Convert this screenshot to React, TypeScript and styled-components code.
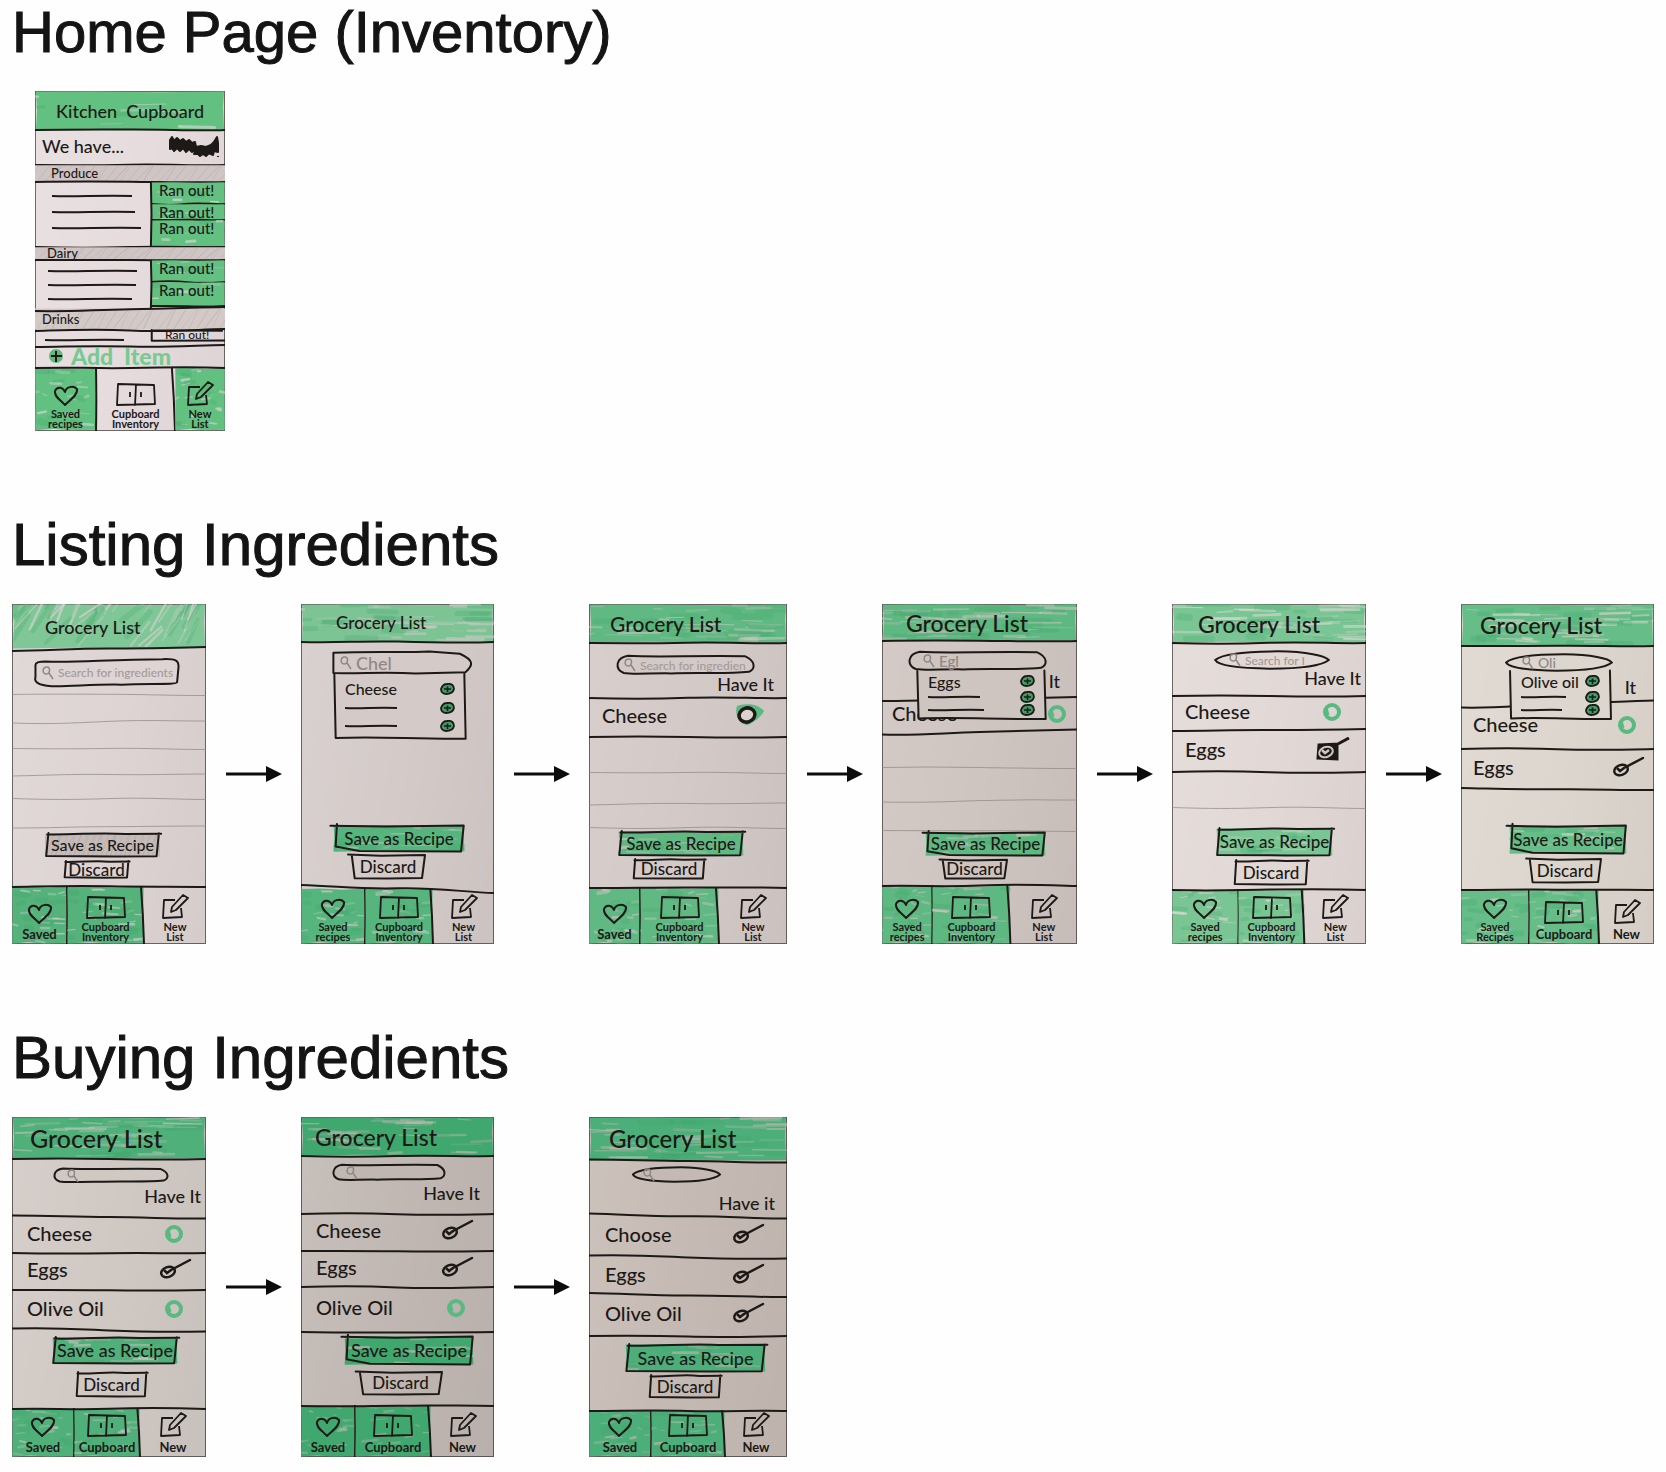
import React from "react";
import styled, { createGlobalStyle } from "styled-components";

const INK = "#1d1917";
const PENCIL = "#8f8785";

/* ---------- page ---------- */

const GlobalStyle = createGlobalStyle`
  *, *::before, *::after { box-sizing: border-box; }
  body { margin: 0; background: #fefefe; color: #141414; }
  ul, h2, h3, h4, p { margin: 0; padding: 0; font-weight: inherit; }
  ul { list-style: none; }
  button, input { font: inherit; color: inherit; background: none; border: 0; padding: 0; margin: 0; border-radius: 0; }
  button { cursor: pointer; }
  svg { display: block; }
`;

const Page = styled.main`
  display: flex;
  flex-direction: column;
  gap: 82px;
  padding: 0 12px 15px;
`;

const Section = styled.section`
  display: flex;
  flex-direction: column;
  gap: 27px;
`;

const SectionTitle = styled.h2<{ $size: number }>`
  font: 400 ${(p) => p.$size}px/64px "Liberation Sans", Arial, sans-serif;
  -webkit-text-stroke: 1px #141414;
`;

const Flow = styled.div`
  display: grid;
  grid-template-columns: 194fr 95px 193fr 95px 198fr 95px 195fr 95px 194fr 95px 193fr;
  align-items: center;
`;

const HomeSlot = styled.div`
  width: 190px;
  margin-left: 23px;
`;

const ArrowSlot = styled.div`
  display: flex;
  justify-content: center;
`;

/* ---------- phone parts ---------- */

const Paper = styled.article<{ $paper: string }>`
  position: relative;
  display: flex;
  flex-direction: column;
  height: 340px;
  overflow: hidden;
  color: ${INK};
  font: 500 16px/18px Lato, "Open Sans", sans-serif;
  white-space: nowrap;
  background: linear-gradient(100deg, rgba(255, 255, 255, 0.12), rgba(0, 0, 0, 0) 50%, rgba(0, 0, 0, 0.04)) ${(p) => p.$paper};
  box-shadow: inset 0 0 0 1px rgba(30, 25, 23, 0.6);
`;

const Header = styled.header<{ $h: number; $left: number }>`
  position: relative;
  flex: none;
  display: flex;
  align-items: center;
  height: ${(p) => p.$h}px;
  padding-left: ${(p) => p.$left}px;
`;

const Title = styled.h3<{ $size: number }>`
  position: relative;
  font-size: ${(p) => p.$size}px;
  line-height: 24px;
`;

const Backdrop = styled.svg<{ $clip?: boolean }>`
  position: absolute;
  inset: 0;
  width: 100%;
  height: 100%;
  overflow: ${(p) => (p.$clip ? "hidden" : "visible")};
  pointer-events: none;
`;

const Rule = styled.svg`
  position: absolute;
  left: 0;
  bottom: -6px;
  width: 100%;
  height: 12px;
  overflow: visible;
  pointer-events: none;
`;

const SearchArea = styled.div<{ $h: number; $top: number }>`
  position: relative;
  flex: none;
  display: flex;
  flex-direction: column;
  height: ${(p) => p.$h}px;
  padding-top: ${(p) => p.$top}px;
`;

const Field = styled.label<{ $left: number; $w: number; $h: number; $pad: number }>`
  position: relative;
  z-index: 2;
  display: flex;
  align-items: center;
  gap: 4px;
  width: ${(p) => p.$w}px;
  height: ${(p) => p.$h}px;
  margin-left: ${(p) => p.$left}px;
  padding-left: ${(p) => p.$pad}px;
`;

const FieldInput = styled.input<{ $size: number }>`
  position: relative;
  flex: 1;
  min-width: 0;
  height: 100%;
  outline: none;
  color: ${PENCIL};
  font-size: ${(p) => p.$size}px;
  &::placeholder { color: #a39b99; opacity: 1; }
`;

const HaveIt = styled.p<{ $top: number; $right: number }>`
  margin-top: ${(p) => p.$top}px;
  padding-right: ${(p) => p.$right}px;
  text-align: right;
  font-size: 18px;
`;

const Suggestions = styled.ul<{ $left: number; $top: number; $w: number; $h: number }>`
  position: absolute;
  z-index: 1;
  left: ${(p) => p.$left}px;
  top: ${(p) => p.$top}px;
  display: flex;
  flex-direction: column;
  justify-content: space-evenly;
  width: ${(p) => p.$w}px;
  height: ${(p) => p.$h}px;
  padding: 2px 12px 2px 12px;
`;

const Suggestion = styled.li`
  position: relative;
  display: flex;
  align-items: center;
  justify-content: space-between;
  font-size: 16px;
  line-height: 15px;
`;

const AddButton = styled.button`
  display: block;
`;

const Items = styled.ul`
  flex: none;
`;

const Item = styled.li<{ $h: number; $left: number; $right: number }>`
  position: relative;
  display: flex;
  align-items: center;
  justify-content: space-between;
  height: ${(p) => p.$h}px;
  padding: 0 ${(p) => p.$right}px 5px ${(p) => p.$left}px;
  font-size: 20px;
`;

const Tick = styled.label`
  position: relative;
  display: flex;
  justify-content: center;
  width: 36px;
  height: 24px;
`;

const TickInput = styled.input`
  position: absolute;
  inset: 0;
  appearance: none;
  cursor: pointer;
`;

const BlankRow = styled.div<{ $h: number }>`
  position: relative;
  flex: none;
  height: ${(p) => p.$h}px;
`;

const Actions = styled.div<{ $bottom: number; $gap: number }>`
  display: flex;
  flex-direction: column;
  gap: ${(p) => p.$gap}px;
  margin-top: auto;
  padding-bottom: ${(p) => p.$bottom}px;
`;

const Action = styled.button<{ $left: number; $w: number; $h: number; $size: number }>`
  position: relative;
  width: ${(p) => p.$w}px;
  height: ${(p) => p.$h}px;
  margin-left: ${(p) => p.$left}px;
  font-size: ${(p) => p.$size}px;
  line-height: ${(p) => p.$h}px;
  white-space: nowrap;
`;

const Label = styled.span`
  position: relative;
`;

const Tabs = styled.nav<{ $h: number; $cols: string }>`
  position: relative;
  flex: none;
  display: grid;
  grid-template-columns: ${(p) => p.$cols};
  height: ${(p) => p.$h}px;
`;

const Tab = styled.a`
  position: relative;
  display: flex;
  flex-direction: column;
  align-items: center;
  justify-content: flex-end;
  gap: 2px;
  padding-bottom: 2px;
  color: inherit;
  text-decoration: none;
`;

const TabText = styled.span<{ $big: boolean }>`
  position: relative;
  display: flex;
  flex-direction: column;
  align-items: center;
  font-weight: 700;
  font-size: ${(p) => (p.$big ? 13 : 11)}px;
  line-height: ${(p) => (p.$big ? 15 : 10)}px;
`;

const Glyph = styled.svg`
  position: relative;
`;

/* home screen parts */

const WeHave = styled.div`
  position: relative;
  flex: none;
  display: flex;
  align-items: center;
  justify-content: space-between;
  height: 35px;
  padding: 0 5px 4px 7px;
  font-size: 18px;
`;

const Band = styled.h4<{ $h: number; $left: number }>`
  position: relative;
  flex: none;
  height: ${(p) => p.$h}px;
  padding-left: ${(p) => p.$left}px;
  font-size: 13px;
  line-height: ${(p) => p.$h}px;
`;

const Group = styled.div<{ $h: number }>`
  position: relative;
  flex: none;
  display: grid;
  grid-template-columns: 116fr 74fr;
  height: ${(p) => p.$h}px;
`;

const Notes = styled.div<{ $left: number; $top: number; $gap: number }>`
  display: flex;
  flex-direction: column;
  gap: ${(p) => p.$gap}px;
  padding: ${(p) => p.$top}px 0 0 ${(p) => p.$left}px;
`;

const RanColumn = styled.div`
  display: flex;
  flex-direction: column;
`;

const RanOut = styled.button<{ $h: number; $small: boolean }>`
  position: relative;
  display: flex;
  align-items: flex-start;
  height: ${(p) => p.$h}px;
  padding: ${(p) => (p.$small ? "0 0 0 14px" : "1px 0 0 8px")};
  font-size: ${(p) => (p.$small ? 12 : 15)}px;
  line-height: ${(p) => (p.$small ? 10 : 14)}px;
`;

const AddItem = styled.button`
  position: relative;
  flex: none;
  display: flex;
  align-items: center;
  gap: 7px;
  height: 21px;
  padding-left: 14px;
  color: #78ca92;
  font-size: 23px;
  line-height: 21px;
  font-weight: 900;
`;

/* ---------- ink drawing ---------- */

function random(seed: number) {
  let s = seed * 7919 + 13;
  return () => {
    s = (s * 16807) % 2147483647;
    return s / 2147483647;
  };
}

function Marker({ seed, color, light, streaks = 22, slanted = false }: {
  seed: number; color: string; light: string; streaks?: number; slanted?: boolean;
}) {
  const r = random(seed);
  r();
  const lines = Array.from({ length: streaks }, (_, i) => {
    const x = r() * 190 - 8;
    const y = r() * 92 + 3;
    const len = slanted ? 10 + r() * 18 : 8 + r() * 34;
    const rise = slanted ? -(35 + r() * 40) : r() * 6 - 3;
    const dark = i % 3 === 2;
    return (
      <path
        key={i}
        d={`M${x} ${y} l${len} ${rise}`}
        stroke={dark ? "#3da869" : light}
        strokeWidth={dark ? 3 + r() * 4 : 1 + r() * 2}
        opacity={dark ? 0.25 : 0.2 + r() * 0.45}
        vectorEffect="non-scaling-stroke"
        strokeLinecap="round"
      />
    );
  });
  return (
    <Backdrop $clip viewBox="0 0 200 100" preserveAspectRatio="none" aria-hidden>
      <path d="M1 2 L60 1 L130 3 L199 1 L198 40 L199 98 L120 99 L60 97 L1 99 L2 50Z" fill={color} />
      {lines}
    </Backdrop>
  );
}

function Hatch({ color = "#c5bcba" }: { color?: string }) {
  return (
    <Backdrop $clip viewBox="0 0 200 100" preserveAspectRatio="none" aria-hidden>
      <path d="M0 2H200V98H0Z" fill={color} />
      {Array.from({ length: 26 }, (_, i) => (
        <path key={i} d={`M${i * 8 - 6} 96 l${10 + (i % 3) * 3} -90`} stroke="#8b8381" strokeWidth={1} opacity={0.12 + (i % 4) * 0.05} vectorEffect="non-scaling-stroke" />
      ))}
    </Backdrop>
  );
}

function InkRule({ seed = 1, tilt = 0, pencil = false }: { seed?: number; tilt?: number; pencil?: boolean }) {
  const r = random(seed);
  r();
  const a = 6 - tilt / 2;
  const b = 6 + tilt / 2;
  const w = () => r() * 3 - 1.5;
  return (
    <Rule viewBox="0 0 200 12" preserveAspectRatio="none" aria-hidden>
      <path
        d={`M0 ${a} C40 ${a + w()} 60 ${6 + w()} 100 ${6 + w() / 2} S170 ${b + w()} 200 ${b}`}
        fill="none"
        stroke={pencil ? PENCIL : INK}
        strokeWidth={pencil ? 1 : 2}
        opacity={pencil ? 0.7 : 1}
        vectorEffect="non-scaling-stroke"
      />
    </Rule>
  );
}

function SideRule({ lean = 0 }: { lean?: number }) {
  return (
    <Backdrop viewBox="0 0 100 100" preserveAspectRatio="none" aria-hidden>
      <path d={`M${100 - lean} 0 Q${101 - lean / 2} 50 100 100`} fill="none" stroke={INK} strokeWidth={2} vectorEffect="non-scaling-stroke" />
    </Backdrop>
  );
}

const OUTLINES = {
  soft: "M8 12 C30 16 50 5 88 4 C98 2 99 10 99 30 L98 84 C98 92 80 88 60 92 C40 90 25 99 12 97 C2 94 0 80 1 66 L1 24 C1 14 4 12 8 12Z",
  bullet: "M1 8 C30 0 50 8 70 2 L92 12 C102 40 102 60 96 92 L60 98 C40 90 20 99 1 96Z",
  pill: "M8 4 C30 12 55 2 94 6 C102 30 102 70 97 84 C80 96 60 86 40 92 C25 90 12 99 5 90 C-2 70 -1 14 8 4Z",
  lens: "M1 50 C8 10 30 2 55 2 C80 4 96 26 99 50 C92 86 70 98 48 98 C24 96 4 84 1 50Z",
  box: "M1 2 L2 97 C35 94 60 99 99 98 L98 1",
  frame: "M1 0 L1 98 L100 96 M1 3 L96 6",
  card: "M2 6 C30 8 45 -4 70 4 L101 3 M99 2 L97 97 L60 98 L1 96 L3 0",
  skew: "M-2 3 L40 6 L99 2 L97 98 L20 96 L2 80 L3 -4",
  flag: "M-4 2 L40 7 L100 4 L96 96 L50 98 L5 97 L1 4",
};

function Outline({ shape, fill = "none" }: { shape: keyof typeof OUTLINES; fill?: string }) {
  return (
    <Backdrop viewBox="0 0 100 100" preserveAspectRatio="none" aria-hidden>
      <path d={OUTLINES[shape]} fill={fill} stroke={INK} strokeWidth={2} strokeLinejoin="round" strokeLinecap="round" vectorEffect="non-scaling-stroke" />
    </Backdrop>
  );
}

const NoteLine = ({ w }: { w: number }) => (
  <svg width={w} height={4} viewBox="0 0 100 4" preserveAspectRatio="none" aria-hidden>
    <path d="M0 2 C30 3 60 1 100 2" fill="none" stroke={INK} strokeWidth={2} vectorEffect="non-scaling-stroke" />
  </svg>
);

const Lens = () => (
  <Glyph width={13} height={16} viewBox="0 0 13 16" fill="none" stroke={PENCIL} strokeWidth={1.5} aria-hidden>
    <path d="M6 2 C1 2 1 9 5 9 C9 9 10 2 6 2 M8 8 L12 14" />
  </Glyph>
);

const Plus = () => (
  <svg width={15} height={12} viewBox="0 0 15 12" aria-hidden>
    <path d="M7 1 C12 0 14 3 14 6 C13 10 10 11 6 11 C2 11 1 8 1 6 C2 3 4 1 7 1Z" fill="#3f9c66" stroke={INK} strokeWidth={1.8} />
    <path d="M4 6 H11 M7.500 3.500 V9" stroke={INK} strokeWidth={1.6} />
  </svg>
);

const Heart = () => (
  <Glyph width={26} height={22} viewBox="0 0 26 22" fill="none" stroke={INK} strokeWidth={2} strokeLinejoin="round" aria-hidden>
    <path d="M12 20 C8 15 1 12 2 6 C4 1 10 2 12 7 C13 2 20 0 24 4 C25 10 17 15 12 20Z" />
  </Glyph>
);

const Cupboard = () => (
  <Glyph width={42} height={25} viewBox="0 0 42 25" fill="none" stroke={INK} strokeWidth={1.8} strokeLinejoin="round" aria-hidden>
    <path d="M3 2 L39 3 L40 22 L2 23 Z M21 2 L20 24 M15 10 V15 M26 10 V15" />
  </Glyph>
);

const Edit = () => (
  <Glyph width={28} height={26} viewBox="0 0 28 26" fill="none" stroke={INK} strokeWidth={1.8} strokeLinejoin="round" aria-hidden>
    <path d="M14 6 L3 6 L2 24 L21 23 L20 14 M10 18 L11 13 L22 1 L27 4 L15 16 Z" />
  </Glyph>
);

type Mark = "ring" | "inkRing" | "boxed" | "done";

function MarkDrawing({ mark }: { mark: Mark }) {
  if (mark === "ring")
    return (
      <Glyph width={36} height={24} viewBox="0 0 36 24" fill="none" aria-hidden>
        <ellipse cx={18} cy={13} rx={7} ry={7} stroke="#58b981" strokeWidth={4} />
        <path d="M12 9 L14 16" stroke="#58b981" strokeWidth={3} />
      </Glyph>
    );
  if (mark === "inkRing")
    return (
      <Glyph width={36} height={24} viewBox="0 0 36 24" aria-hidden>
        <path d="M7 3 C14 0 28 0 34 8 C31 14 24 19 18 22 C10 22 4 13 7 3Z" fill="#58b981" />
        <ellipse cx={17} cy={12} rx={8} ry={7} fill="#dbd1ce" stroke={INK} strokeWidth={3.500} transform="rotate(-18 17 12)" />
      </Glyph>
    );
  const inner = mark === "boxed" ? "#cfc6c2" : INK;
  return (
    <Glyph width={36} height={24} viewBox="0 0 36 24" fill="none" stroke={INK} aria-hidden>
      {mark === "boxed" && <path d="M5 8 L23 7 L23 22 L4 21Z M22 8 L35 1" fill={INK} strokeWidth={3} />}
      <ellipse cx={12} cy={15} rx={7} ry={5} strokeWidth={mark === "boxed" ? 2 : 2.500} stroke={inner} transform="rotate(-20 12 15)" />
      <path d="M8 13 L11 16 L15 13" strokeWidth={2.500} stroke={inner} />
      {mark === "done" && <path d="M15 13 L34 3" strokeWidth={2.500} strokeLinecap="round" />}
    </Glyph>
  );
}

const Arrow = () => (
  <ArrowSlot>
    <svg width={56} height={18} viewBox="0 0 56 18" role="img" aria-label="leads to">
      <path d="M0 9 H42" stroke="#0c0c0c" strokeWidth={3} />
      <path d="M40 1 L56 9 L40 17Z" fill="#0c0c0c" />
    </svg>
  </ArrowSlot>
);

/* ---------- composed parts ---------- */

type TabLabels = [string[], string[], string[]];

const TopEdge = styled.div`
  position: absolute;
  inset: 0 0 auto 0;
  height: 1px;
`;

function TabBar({ h, cols, labels, green, paper, active = 2, seed, tilt = 0 }: {
  h: number; cols: [number, number, number]; labels: TabLabels; green: string; paper: string; active?: number; seed: number; tilt?: number;
}) {
  const icons = [<Heart key="h" />, <Cupboard key="c" />, <Edit key="e" />];
  return (
    <Tabs $h={h} $cols={cols.map((c) => `minmax(0, ${c}fr)`).join(" ")}>
      {labels.map((words, i) => (
        <Tab key={i} href={`#${words[0].toLowerCase()}`}>
          {i !== active && <Marker seed={seed + i} color={green} light={paper} streaks={24} />}
          {i < 2 && <SideRule lean={i * 4} />}
          {icons[i]}
          <TabText $big={words.length === 1}>
            {words.map((w) => <span key={w}>{w}</span>)}
          </TabText>
        </Tab>
      ))}
      <TopEdge><InkRule seed={seed} tilt={tilt} /></TopEdge>
    </Tabs>
  );
}

interface Screen {
  seed: number;
  paper: string;
  green: string;
  tabGreen?: string;
  slanted?: boolean;
  header: { h: number; left: number; size: number; tilt?: number };
  area: number;
  areaTilt?: number;
  search: { top: number; left: number; w: number; h: number; pad: number; size: number; shape: "soft" | "bullet" | "pill" | "lens"; value?: string; hint?: string };
  popup?: { left: number; w: number; h: number; word: string; lines: number[] };
  have?: { top: number; right: number; text: string };
  items?: { name: string; mark: Mark; h: number; tilt?: number }[];
  itemPad?: [number, number];
  blanks?: number[];
  save: [number, number, number];
  saveSize?: number;
  saveGrey?: boolean;
  discard: [number, number, number];
  gap: number;
  bottom: number;
  tabs: { h: number; cols: [number, number, number]; labels: TabLabels; tilt?: number };
}

function GroceryScreen({ s }: { s: Screen }) {
  const [padL, padR] = s.itemPad ?? [13, 8];
  return (
    <Paper $paper={s.paper}>
      <Header $h={s.header.h} $left={s.header.left}>
        <Marker seed={s.seed} color={s.green} light={s.paper} streaks={s.slanted ? 54 : 48} slanted={s.slanted} />
        <Title $size={s.header.size}>Grocery List</Title>
        <InkRule seed={s.seed + 3} tilt={s.header.tilt} />
      </Header>
      <SearchArea $h={s.area} $top={s.search.top}>
        <Field $left={s.search.left} $w={s.search.w} $h={s.search.h} $pad={s.search.pad}>
          <Outline shape={s.search.shape} fill={s.paper} />
          <Lens />
          <FieldInput $size={s.search.size} aria-label="Search for ingredients" placeholder={s.search.hint} defaultValue={s.search.value} />
        </Field>
        {s.popup && (
          <Suggestions $left={s.popup.left} $top={s.search.top + s.search.h - 1} $w={s.popup.w} $h={s.popup.h}>
            <Outline shape="box" fill={s.paper} />
            <Suggestion><span>{s.popup.word}</span><AddButton aria-label={`Add ${s.popup.word}`}><Plus /></AddButton></Suggestion>
            {s.popup.lines.map((w, i) => (
              <Suggestion key={i}><NoteLine w={w} /><AddButton aria-label="Add suggestion"><Plus /></AddButton></Suggestion>
            ))}
          </Suggestions>
        )}
        {s.have && <HaveIt $top={s.have.top} $right={s.have.right}>{s.have.text}</HaveIt>}
        {s.items && <InkRule seed={s.seed + 5} tilt={s.areaTilt} />}
      </SearchArea>
      {s.items && (
        <Items>
          {s.items.map((it, i) => (
            <Item key={it.name} $h={it.h} $left={padL} $right={padR}>
              <span>{it.name}</span>
              <Tick>
                <TickInput type="checkbox" aria-label={`Have ${it.name}`} defaultChecked={it.mark === "done" || it.mark === "boxed"} />
                <MarkDrawing mark={it.mark} />
              </Tick>
              <InkRule seed={s.seed + 7 + i} tilt={it.tilt} />
            </Item>
          ))}
        </Items>
      )}
      {s.blanks?.map((h, i) => (
        <BlankRow key={i} $h={h}><InkRule pencil seed={s.seed + 20 + i} tilt={i % 2 ? -2 : 1} /></BlankRow>
      ))}
      <Actions $bottom={s.bottom} $gap={s.gap}>
        <Action $left={s.save[0]} $w={s.save[1]} $h={s.save[2]} $size={s.saveSize ?? 17}>
          {s.saveGrey ? <Hatch /> : <Marker seed={s.seed + 31} color={s.tabGreen ?? s.green} light={s.paper} streaks={16} />}
          <Outline shape={s.seed % 2 ? "card" : "skew"} />
          <Label>Save as Recipe</Label>
        </Action>
        <Action $left={s.discard[0]} $w={s.discard[1]} $h={s.discard[2]} $size={17}>
          <Outline shape={s.seed % 2 ? "card" : "flag"} />
          <Label>Discard</Label>
        </Action>
      </Actions>
      <TabBar {...s.tabs} green={s.tabGreen ?? s.green} paper={s.paper} seed={s.seed + 40} />
    </Paper>
  );
}

const HOME_PAPER = "#e6dcdd";
const HOME_GREEN = "#62c081";

function RanOutButton({ h, seed, small = false }: { h: number; seed: number; small?: boolean }) {
  return (
    <RanOut $h={h} $small={small}>
      {small ? <Outline shape="frame" /> : <Marker seed={seed} color={HOME_GREEN} light={HOME_PAPER} streaks={5} />}
      <Label>Ran out!</Label>
      {!small && <InkRule seed={seed} />}
    </RanOut>
  );
}

const DividerBox = styled.div`
  position: absolute;
  inset: 0 39% 0 0;
`;

const GroupDivider = () => <DividerBox><SideRule /></DividerBox>;

function HomeScreen() {
  return (
    <Paper $paper={HOME_PAPER}>
      <Header $h={39} $left={21}>
        <Marker seed={2} color={HOME_GREEN} light={HOME_PAPER} streaks={8} />
        <Title $size={18}>Kitchen&nbsp; Cupboard</Title>
        <InkRule seed={4} />
      </Header>
      <WeHave>
        <span>We have...</span>
        <svg width={52} height={24} viewBox="0 0 52 24" fill={INK} stroke={INK} strokeWidth={2} strokeLinejoin="round" aria-hidden>
          <path d="M2 6 L4 3 L6 7 L9 4 L12 7 L15 5 L18 8 L21 6 L24 9 L27 8 L28 13 L33 12 L38 13 L43 11 L46 8 L49 3 L50 9 L50 18 L46 17 L45 21 L41 19 L38 22 L35 20 L32 22 L30 20 L26 20 L28 15 L24 18 L21 15 L18 18 L15 14 L12 17 L9 14 L6 17 L4 14 L2 15Z" />
          <path d="M50 22 L50 23" />
        </svg>
        <InkRule seed={6} />
      </WeHave>
      <Band $h={17} $left={16}><Hatch color="#cfc5c4" /><Label>Produce</Label><InkRule seed={7} /></Band>
      <Group $h={65}>
        <Notes $left={17} $top={12} $gap={12}><NoteLine w={80} /><NoteLine w={83} /><NoteLine w={89} /></Notes>
        <RanColumn>
          <RanOutButton h={22} seed={8} /><RanOutButton h={16} seed={9} /><RanOutButton h={27} seed={12} />
        </RanColumn>
        <GroupDivider />
        <InkRule seed={11} />
      </Group>
      <Band $h={13} $left={12}><Hatch color="#cfc5c4" /><Label>Dairy</Label><InkRule seed={12} /></Band>
      <Group $h={48}>
        <Notes $left={13} $top={9} $gap={10}><NoteLine w={89} /><NoteLine w={88} /><NoteLine w={84} /></Notes>
        <RanColumn><RanOutButton h={22} seed={13} /><RanOutButton h={24} seed={15} /></RanColumn>
        <GroupDivider />
      </Group>
      <Band $h={22} $left={7}>
        <Hatch color="#d3cac8" />
        <TopEdge><InkRule seed={14} tilt={-4} /></TopEdge>
        <Label>Drinks</Label>
        <InkRule seed={16} tilt={-2} />
      </Band>
      <Group $h={16}>
        <Notes $left={10} $top={8} $gap={0}><NoteLine w={79} /></Notes>
        <RanColumn><RanOutButton h={11} seed={17} small /></RanColumn>
        <InkRule seed={18} tilt={-2} />
      </Group>
      <AddItem>
        <svg width={15} height={15} viewBox="0 0 15 15" aria-hidden>
          <circle cx={7} cy={7} r={7} fill="#62b67f" />
          <path d="M2 7 H13 M7 2 V13" stroke={INK} strokeWidth={2} />
        </svg>
        <span>Add&nbsp; Item</span>
      </AddItem>
      <TabBar
        h={64} cols={[61, 79, 50]} active={1} seed={50} green={HOME_GREEN} paper={HOME_PAPER}
        labels={[["Saved", "recipes"], ["Cupboard", "Inventory"], ["New", "List"]]}
      />
    </Paper>
  );
}

/* ---------- content ---------- */

const FULL: TabLabels = [["Saved", "recipes"], ["Cupboard", "Inventory"], ["New", "List"]];
const SHORT_SAVED: TabLabels = [["Saved"], ["Cupboard", "Inventory"], ["New", "List"]];
const SHORT: TabLabels = [["Saved"], ["Cupboard"], ["New"]];

const listing: Screen[] = [
  {
    seed: 1, paper: "#ddd4d3", green: "#7fc796", tabGreen: "#55b27b", slanted: true,
    header: { h: 45, left: 33, size: 18, tilt: -4 }, area: 45,
    search: { top: 9, left: 22, w: 146, h: 29, pad: 7, size: 12, shape: "soft", hint: "Search for ingredients" },
    blanks: [1, 27, 27, 26, 24, 28],
    save: [33, 115, 24], saveSize: 16, saveGrey: true, discard: [52, 65, 17], gap: 4, bottom: 8,
    tabs: { h: 58, cols: [55, 77, 62], labels: SHORT_SAVED },
  },
  {
    seed: 2, paper: "#d4cbc9", green: "#7cc494", tabGreen: "#55b57c",
    header: { h: 38, left: 35, size: 17 }, area: 100,
    search: { top: 9, left: 31, w: 139, h: 23, pad: 7, size: 18, shape: "bullet", value: "Chel" },
    popup: { left: 32, w: 134, h: 67, word: "Cheese", lines: [52, 52] },
    save: [32, 132, 27], discard: [50, 74, 25], gap: 2, bottom: 9,
    tabs: { h: 56, cols: [64, 68, 61], labels: FULL, tilt: 8 },
  },
  {
    seed: 3, paper: "#d3c9c7", green: "#60b982",
    header: { h: 39, left: 21, size: 21 }, area: 55,
    search: { top: 12, left: 28, w: 136, h: 20, pad: 6, size: 12, shape: "pill", hint: "Search for ingredien" },
    have: { top: 0, right: 13, text: "Have It" },
    items: [{ name: "Cheese", mark: "inkRing", h: 39 }], itemPad: [13, 21],
    blanks: [36, 31, 24],
    save: [29, 126, 25], discard: [44, 72, 20], gap: 3, bottom: 8,
    tabs: { h: 57, cols: [51, 79, 68], labels: SHORT_SAVED },
  },
  {
    seed: 4, paper: "#cec4c0", green: "#5eb881",
    header: { h: 37, left: 24, size: 23 }, area: 58, areaTilt: -4,
    search: { top: 10, left: 27, w: 136, h: 20, pad: 13, size: 15, shape: "pill", value: "Egl" },
    popup: { left: 34, w: 131, h: 50, word: "Eggs", lines: [52, 56] },
    have: { top: 1, right: 17, text: "It" },
    items: [{ name: "Cheese", mark: "ring", h: 33, tilt: -5 }], itemPad: [10, 2],
    blanks: [36, 33, 30],
    save: [43, 121, 24], discard: [60, 65, 20], gap: 3, bottom: 6,
    tabs: { h: 59, cols: [50, 78, 66], labels: FULL },
  },
  {
    seed: 5, paper: "#e2d9d6", green: "#79c694",
    header: { h: 39, left: 26, size: 23 }, area: 53,
    search: { top: 8, left: 42, w: 116, h: 18, pad: 14, size: 12, shape: "lens", hint: "Search for I" },
    have: { top: 0, right: 5, text: "Have It" },
    items: [{ name: "Cheese", mark: "ring", h: 34, tilt: -2 }, { name: "Eggs", mark: "boxed", h: 42 }], itemPad: [13, 16],
    blanks: [36],
    save: [44, 117, 28], discard: [62, 74, 25], gap: 4, bottom: 4,
    tabs: { h: 55, cols: [66, 66, 61], labels: FULL },
  },
  {
    seed: 6, paper: "#ddd6ce", green: "#66bd88",
    header: { h: 42, left: 19, size: 23 }, area: 58, areaTilt: -7,
    search: { top: 8, left: 44, w: 108, h: 17, pad: 16, size: 14, shape: "lens", value: "Oli" },
    popup: { left: 48, w: 103, h: 50, word: "Olive oil", lines: [45, 41] },
    have: { top: 7, right: 18, text: "It" },
    items: [{ name: "Cheese", mark: "ring", h: 45 }, { name: "Eggs", mark: "done", h: 40, tilt: 2 }], itemPad: [12, 9],
    save: [48, 118, 29], discard: [68, 72, 25], gap: 4, bottom: 6,
    tabs: { h: 55, cols: [68, 70, 55], labels: [["Saved", "Recipes"], ["Cupboard"], ["New"]] },
  },
];

const buying: Screen[] = [
  {
    seed: 7, paper: "#d0c8c3", green: "#4fb07a",
    header: { h: 42, left: 18, size: 25 }, area: 58, areaTilt: 3,
    search: { top: 9, left: 42, w: 113, h: 15, pad: 12, size: 12, shape: "pill" },
    have: { top: 4, right: 5, text: "Have It" },
    items: [{ name: "Cheese", mark: "ring", h: 36 }, { name: "Eggs", mark: "done", h: 37 }, { name: "Olive Oil", mark: "ring", h: 40, tilt: 3 }],
    itemPad: [15, 14],
    save: [40, 126, 27], saveSize: 18, discard: [64, 71, 25], gap: 8, bottom: 11,
    tabs: { h: 49, cols: [62, 66, 66], labels: SHORT },
  },
  {
    seed: 8, paper: "#c0b7b2", green: "#40a86f",
    header: { h: 39, left: 14, size: 23 }, area: 58,
    search: { top: 8, left: 32, w: 111, h: 17, pad: 12, size: 12, shape: "pill" },
    have: { top: 3, right: 14, text: "Have It" },
    items: [{ name: "Cheese", mark: "done", h: 37 }, { name: "Eggs", mark: "done", h: 36 }, { name: "Olive Oil", mark: "ring", h: 45 }],
    itemPad: [15, 20],
    save: [43, 130, 29], saveSize: 18, discard: [58, 83, 24], gap: 6, bottom: 10,
    tabs: { h: 52, cols: [54, 76, 63], labels: SHORT },
  },
  {
    seed: 9, paper: "#c5bab3", green: "#4cae79",
    header: { h: 44, left: 20, size: 24, tilt: 3 }, area: 55, areaTilt: 5,
    search: { top: 6, left: 43, w: 89, h: 15, pad: 10, size: 12, shape: "lens" },
    have: { top: 12, right: 12, text: "Have it" },
    items: [{ name: "Choose", mark: "done", h: 41, tilt: 3 }, { name: "Eggs", mark: "done", h: 38, tilt: 4 }, { name: "Olive Oil", mark: "done", h: 41 }],
    itemPad: [16, 22],
    save: [36, 141, 28], saveSize: 18, discard: [60, 72, 23], gap: 3, bottom: 12,
    tabs: { h: 47, cols: [62, 74, 62], labels: SHORT },
  },
];

const Screens = ({ list }: { list: Screen[] }) => (
  <Flow>
    {list.map((s, i) => (
      <React.Fragment key={s.seed}>
        {i > 0 && <Arrow />}
        <GroceryScreen s={s} />
      </React.Fragment>
    ))}
  </Flow>
);

export default function App() {
  return (
    <>
      <GlobalStyle />
      <Page>
        <Section>
          <SectionTitle $size={58}>Home Page (Inventory)</SectionTitle>
          <HomeSlot><HomeScreen /></HomeSlot>
        </Section>
        <Section>
          <SectionTitle $size={60}>Listing Ingredients</SectionTitle>
          <Screens list={listing} />
        </Section>
        <Section>
          <SectionTitle $size={60}>Buying Ingredients</SectionTitle>
          <Screens list={buying} />
        </Section>
      </Page>
    </>
  );
}
